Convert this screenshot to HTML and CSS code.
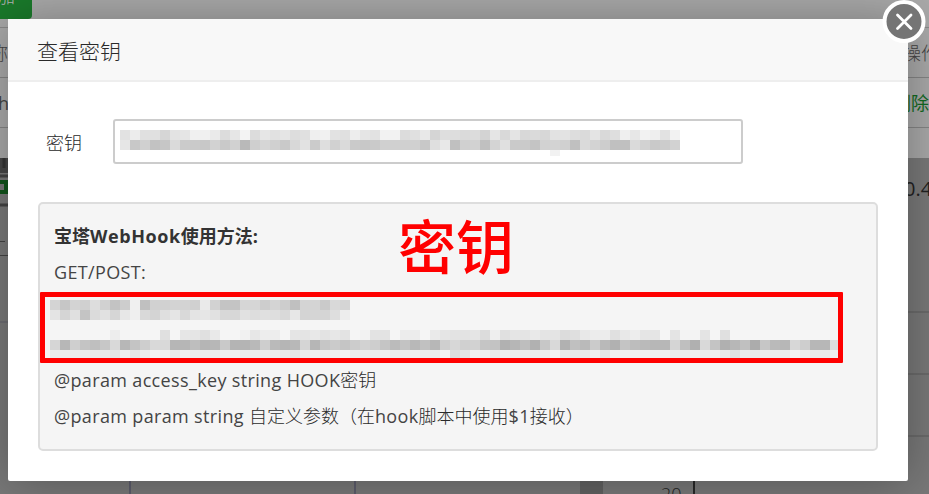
FILE: index.html
```html
<!DOCTYPE html>
<html lang="zh-CN">
<head>
<meta charset="utf-8">
<title>查看密钥</title>
<link rel="stylesheet" href="styles.css">
</head>
<body>
<div class="page">
  <div class="list">
    <div class="toolbar"><span class="add">添加</span></div>
    <div class="row"><span class="name">名称</span><span class="act">操作</span></div>
    <div class="row"><span class="name latin">h</span><span class="act del">删除</span></div>
  </div>
  <svg class="chart" width="929" height="336" viewBox="0 0 929 336">
    <path d="M0 0h8v15H0z" fill="#474747"/>
    <path d="M4 0v10" stroke="#343434" stroke-width="3"/>
    <path d="M0 18h8M0 47h8" stroke="#444" stroke-width="3"/>
    <path d="M0 24h6v10H0" fill="none" stroke="#12551c" stroke-width="4"/>
    <path d="M0 83.500h5M0 97.500h8" stroke="#444"/>
    <path d="M0 164h8" stroke="#62626d"/>
    <path d="M908 154h21M908 216h21M908 278h21" stroke="#5e5e5e"/>
    <path d="M130 323v13M355 323v13" stroke="#5d5d6c" stroke-width="2"/>
    <path d="M580 323h23v13h-23z" fill="#626262"/>
    <path d="M694 323v13" stroke="#292929" stroke-width="2"/>
    <text x="661" y="343" class="tick">20</text>
    <text x="904" y="38" class="load">0.4</text>
  </svg>
</div>
<div class="dialog">
  <div class="title">查看密钥</div>
  <div class="body">
    <div class="field">
      <label>密钥</label>
      <div class="input"><div class="mosaic" data-key="input"></div></div>
    </div>
    <div class="help">
      <p class="strong">宝塔<span class="wide">WebHook</span>使用方法:</p>
      <p class="get"><span class="en">GET/POST:</span></p>
      <div class="marked"><div class="mosaic" data-key="url"></div></div>
      <p><span class="en">@param access_key string HOOK</span>密钥</p>
      <p><span class="en">@param param string </span>自定义参数（在<span class="en">hook</span>脚本中使用<span class="en">$1</span>接收）</p>
      <span class="note">密钥</span>
    </div>
  </div>
  <svg class="close" width="44" height="44" viewBox="0 0 44 44">
    <circle cx="22" cy="21.5" r="19.5" fill="#757575" stroke="#fff" stroke-width="4"/>
    <path d="M15.500 15l13.500 13.500M29 15L15.500 28.500" stroke="#fff" stroke-width="2.800" stroke-linecap="round"/>
  </svg>
</div>
<script src="mosaic.js"></script>
</body>
</html>
```
FILE: styles.css
```css
* { box-sizing: border-box; }
body {
  margin: 0;
  width: 929px;
  height: 494px;
  overflow: hidden;
  position: relative;
  background: #797979;
  color: #2a2a2a;
  font: 300 18px/36px "Open Sans", "Noto Sans CJK SC", sans-serif;
}
p { margin: 0; height: 36px; white-space: nowrap; }
.en { font-weight: 400; letter-spacing: .35px; color: #444; }
.wide { letter-spacing: .6px; }
.list { height: 158px; background: #a9a9a9; overflow: hidden; }
.toolbar { display: flow-root; height: 28px; border-bottom: 1px solid #8a8a8a; }
.add {
  display: flex;
  width: 62px;
  height: 38px;
  margin: -19px 0 0 -30px;
  padding: 0 0 0 9px;
  line-height: 30px;
  border-radius: 4px;
  background: #1a7a2b;
  color: #b2b2b2;
}
.row {
  display: flex;
  justify-content: space-between;
  height: 50px;
  margin: 0 -23px 0 -28px;
  border-bottom: 1px solid #858585;
  line-height: 50px;
  color: #454545;
}
.row .act { padding-right: 13px; }
.row .latin { padding-left: 26px; font-weight: 400; }
.row .del { padding-right: 23px; color: #126a22; font-weight: 400; }
.chart { display: block; }
.tick, .load { font-size: 18px; fill: #222; }
.load { font-size: 20px; font-weight: 400; }
.dialog {
  position: absolute;
  left: 8px;
  top: 19px;
  width: 900px;
  height: 462px;
  border-radius: 2px;
  background: #fff;
  box-shadow: 1px 1px 50px rgba(0, 0, 0, .3);
}
.title {
  height: 63px;
  padding-left: 29px;
  border-bottom: 2px solid #eee;
  background: #f8f8f8;
  line-height: 64px;
  font-size: 21px;
}
.body { padding: 37px 30px 0; }
.field { display: flex; align-items: center; height: 45px; }
.field label { width: 75px; padding: 3px 0 0 8px; }
.input {
  width: 630px;
  height: 45px;
  padding: 9px 5px;
  border: 2px solid #ccc;
  border-radius: 3px;
}
.mosaic { display: flex; flex-direction: column; }
.mosaic div { display: flex; height: 10px; flex: none; }
.mosaic i { width: 10px; height: 10px; flex: none; }
.mosaic[data-key="input"] div:nth-child(3) { height: 6px; overflow: hidden; }
.help {
  position: relative;
  width: 840px;
  height: 249px;
  margin-top: 38px;
  padding: 14px 0 0 14px;
  border: 2px solid #ddd;
  border-radius: 5px;
  background: #f5f5f5;
}
.strong { font-weight: 700; color: #333; }
.marked {
  width: 803px;
  height: 71px;
  margin: 2px 0 -1px -14px;
  padding: 3px 0 0 5px;
  border: 5px solid #f00;
  border-radius: 1px;
  overflow: hidden;
}
.note {
  position: absolute;
  left: 358px;
  top: 7px;
  font-size: 58px;
  line-height: 72px;
  font-weight: 500;
  color: #f00;
}
.close { position: absolute; left: 874px; top: -19px; }
```
FILE: mosaic.js
```js
const rows = {
  input: [
    'e2ece0e0d6e3e5f0f0eadce6f3dce6e1e5dde0eff1e2e0ede5e2f2f2dce0e8d5dedddadcd3e5d9e4d8dad7e2e3dddae4d9deefe7f2eee2f2',
    'e6c8d0c2c6dacbcac8d2c9d1b9cfd6d0c9d8e2cbded1dacac8cad0d0d0d0c8dfe8c0d0d2c0d4e0cacac4d2d3d0c0dad3cdc0c0dad2c9ccd2',
    'ff'.repeat(43) + 'f2'
  ],
  url: [
    'd4c6d3d0ddd1c3cdf0c0d1d1d3d3d0ead2c4c4d6d6cdd4cdc0d4d4cad9d5',
    'e4d5e0c4dbe1d6e7efd9d4dfe5d9e4e6e1d8d7e1dde0ded9e7d4d5d5deed',
    '',
    'f5f5f5f5f5f5edf4f5f5f5e0f5e6e5e0e9f5f5f1e7ededf5e5e4e8e3e7e3f5f2e3e3f5ececf5eae5e3e3e5dceee0e5e4e9e4e4dcdfe8ecece0e8ede5e5f5e4f3f3e4f5e0',
    'd6b7cfc4bfc7d9b7c4ced9d9b6b6beb5b7c9b4b4b9cebab5b8d5b6c6cbc5ccd2cec5bbc3b8c1b7cfd7d0d2c5c3b1b6beb1c7d9b1c0bacbb9b1c4bdbab7b7d5bfb0d9c4b0b7c0acc6bab7d7ceb7b7dc',
    'ebedececeae9e4efe5ecf4f1e9f1ecececeff0ebecededeae5ecf0edeff4ececebf0ebecf0ecebf4dce4f2efe9efececebedf4e9e7e9f0e4f1f1f1f1eff0ebebf0ebf0e9dfebe9edecebf4eeeaeaee'
  ]
};
document.querySelectorAll('.mosaic').forEach(box => {
  rows[box.dataset.key].forEach(row => {
    const line = document.createElement('div');
    (row.match(/../g) || []).forEach(v => {
      const cell = document.createElement('i');
      cell.style.background = '#' + v + v + v;
      line.append(cell);
    });
    box.append(line);
  });
});
```
